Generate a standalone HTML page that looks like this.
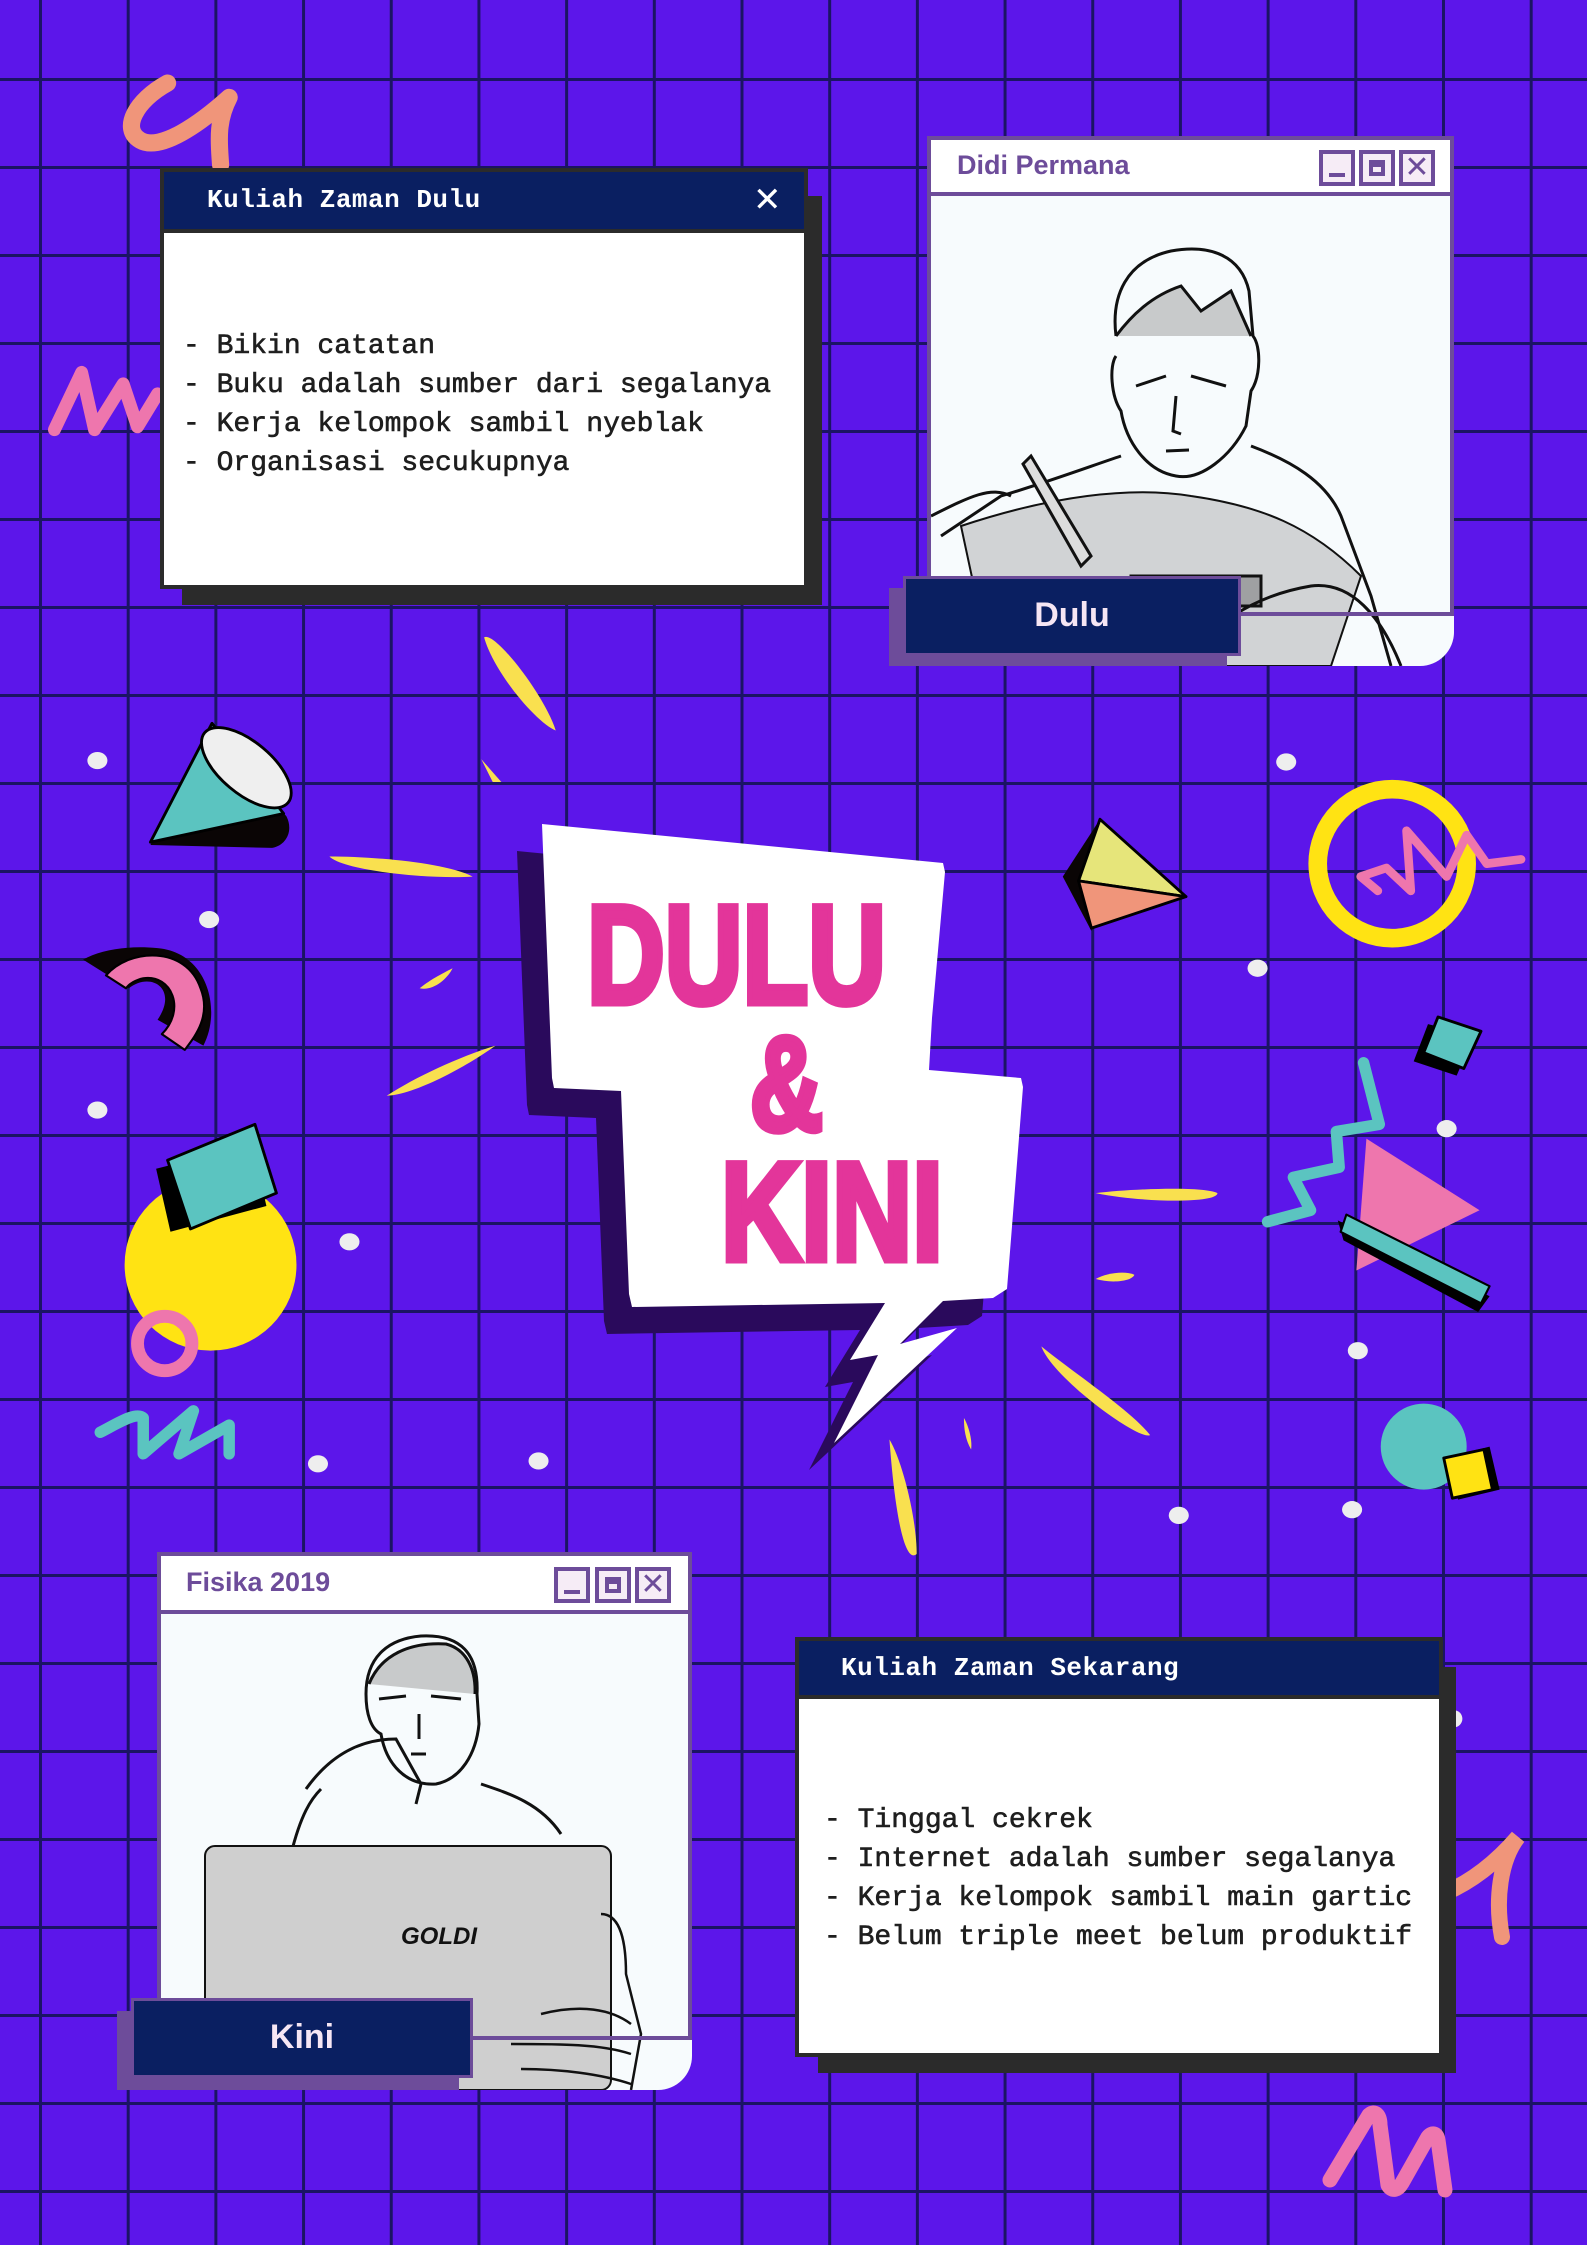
<!DOCTYPE html>
<html><head><meta charset="utf-8">
<style>
*{margin:0;padding:0;box-sizing:border-box}
html,body{width:1587px;height:2245px;overflow:hidden}
body{position:relative;background-color:#5c16ea;
background-image:linear-gradient(90deg,#1b1464 3px,transparent 3px),linear-gradient(180deg,#1b1464 3px,transparent 3px);
background-size:87.7px 88px;background-position:39px 78px;font-family:"Liberation Sans",sans-serif}
.abs{position:absolute}
.shadow{position:absolute;background:#2b2b2b}
.win{position:absolute;background:#fff;border:4px solid #2b2b2b}
.win .bar{position:absolute;left:0;top:0;right:0;background:#0a1f61;border-bottom:4px solid #2b2b2b;color:#fff;font-family:"Liberation Mono",monospace;font-weight:bold;font-size:26px;letter-spacing:0.5px}
.win .txt{position:absolute;font-family:"Liberation Mono",monospace;font-size:28px;line-height:39px;color:#1e1e1e;white-space:pre;-webkit-text-stroke:0.6px #1e1e1e}
.pwin{position:absolute;border:4px solid #6d4c9a;background:transparent}
.ptitle{position:absolute;background:#fff;color:#6d4c9a;font-weight:bold;font-size:27px}
.btn{position:absolute;width:36px;height:36px;border:4px solid #6d4c9a;background:#f6ecf6}
.lbl{position:absolute;background:#0a1f61;border:3px solid #6d4c9a;color:#f6e6f4;font-weight:bold;font-size:34px;text-align:center}
</style></head><body>

<svg class="abs" style="left:0;top:0" width="1587" height="2245" viewBox="0 0 1587 2245">
<g transform="scale(1.4323)" stroke-linecap="round" stroke-linejoin="round">
 <path d="M117,58 C95,70 84,90 98,98 C112,106 140,86 160,68 C151,85 153,100 154,115" fill="none" stroke="#f0957a" stroke-width="12"/>
 <path d="M38,300 L57,260 L66,300 L86,268 L96,298 L110,275" fill="none" stroke="#ee76ad" stroke-width="9"/>
 <path d="M70,1000 C80,995 95,985 100,990 L100,1015 L135,985 L125,1015 L160,995 L160,1015" fill="none" stroke="#5bc4c0" stroke-width="8"/>
 <path d="M885,853 L915,845 L903,822 L935,815 L933,790 L963,785 L952,742" fill="none" stroke="#5bc4c0" stroke-width="8"/>
 <circle cx="972" cy="603" r="52" fill="none" stroke="#ffe313" stroke-width="13"/>
 <path d="M962,622 L950,612 L968,606 L985,622 L982,580 L1010,612 L1024,583 L1038,603 L1062,600" fill="none" stroke="#ee76ad" stroke-width="6"/>
 <g fill="#f9e04f" stroke="none">
  <path d="M338,445 C345,440 380,485 388,510 C375,505 345,470 338,445Z"/>
  <path d="M336,530 L350,546 L344,546Z"/>
  <path d="M230,598 C260,598 310,602 330,612 C300,614 240,608 230,598Z"/>
  <path d="M293,690 C300,684 312,678 316,676 C312,684 302,692 293,690Z"/>
  <path d="M270,765 C290,752 320,738 346,730 C325,745 290,764 270,765Z"/>
  <path d="M765,833 C790,830 840,828 850,833 C850,840 800,840 765,833Z"/>
  <path d="M765,893 C772,889 785,887 792,890 C790,895 775,896 765,893Z"/>
  <path d="M727,940 C745,955 790,985 803,1002 C795,1006 735,962 727,940Z"/>
  <path d="M621,1005 C630,1020 640,1060 640,1085 C632,1092 625,1060 621,1005Z"/>
  <path d="M673,990 C676,995 679,1005 678,1012 C674,1005 673,998 673,990Z"/>
 </g>
 <g fill="#eeeeee">
  <ellipse cx="68" cy="531" rx="7" ry="6"/><ellipse cx="146" cy="642" rx="7" ry="6"/><ellipse cx="68" cy="775" rx="7" ry="6"/>
  <ellipse cx="244" cy="867" rx="7" ry="6"/><ellipse cx="222" cy="1022" rx="7" ry="6"/><ellipse cx="376" cy="1020" rx="7" ry="6"/>
  <ellipse cx="898" cy="532" rx="7" ry="6"/><ellipse cx="878" cy="676" rx="7" ry="6"/><ellipse cx="1010" cy="788" rx="7" ry="6"/>
  <ellipse cx="948" cy="943" rx="7" ry="6"/><ellipse cx="823" cy="1058" rx="7" ry="6"/><ellipse cx="944" cy="1054" rx="7" ry="6"/>
  <ellipse cx="1015" cy="1200" rx="6" ry="6"/>
 </g>
 <path d="M105,590 L190,592 C200,590 205,580 200,570 L150,510 Z" fill="#0a0505"/>
 <path d="M105,588 L148,505 L198,568 Z" fill="#5bc4c0" stroke="#000" stroke-width="2"/>
 <ellipse cx="172" cy="536" rx="38" ry="18" transform="rotate(40 172 536)" fill="#efefef" stroke="#000" stroke-width="2"/>
 <path d="M58,670 L90,690 C105,678 125,690 110,712 L142,730 C155,705 145,665 110,662 C90,660 70,663 58,670Z" fill="#0a0505"/>
 <path d="M74,681 C90,662 130,660 140,690 C148,710 135,725 129,733 L113,722 C130,705 120,680 100,683 C95,684 90,687 88,690Z" fill="#ee76ad" stroke="#000" stroke-width="1.5"/>
 <ellipse cx="147" cy="883" rx="60" ry="60" fill="#ffe313"/>
 <path d="M113,812 L180,795 L190,838 L123,856Z" fill="#000" transform="translate(-4,4)"/>
 <path d="M117,810 L178,785 L193,833 L133,858Z" fill="#5bc4c0" stroke="#000" stroke-width="2"/>
 <circle cx="115" cy="938" r="19" fill="none" stroke="#ee76ad" stroke-width="9"/>
 <path d="M742,612 L768,572 L762,650 Z" fill="#0a0505"/>
 <path d="M768,572 L828,626 L753,615Z" fill="#e6e57a" stroke="#000" stroke-width="2"/>
 <path d="M753,615 L828,626 L762,648Z" fill="#f0957a" stroke="#000" stroke-width="2"/>
 <path d="M990,738 L1000,712 L1032,720 L1020,748Z" fill="#000" transform="translate(-3,3)"/>
 <path d="M994,735 L1004,710 L1034,720 L1022,746Z" fill="#5bc4c0" stroke="#000" stroke-width="2"/>
 <path d="M954,795 L1033,845 L947,887Z" fill="#ee76ad"/>
 <path d="M934,852 L1040,905 L1032,916 L938,866Z" fill="#000"/>
 <path d="M940,848 L1040,898 L1034,910 L936,860Z" fill="#5bc4c0" stroke="#000" stroke-width="1.5"/>
 <circle cx="994" cy="1010" r="30" fill="#5bc4c0"/>
 <path d="M1012,1017 L1040,1010 L1047,1040 L1018,1047Z" fill="#000"/>
 <path d="M1008,1018 L1036,1012 L1042,1040 L1014,1046Z" fill="#ffe313" stroke="#000" stroke-width="2"/>
</g>
<path d="M1445,1893 C1475,1880 1500,1858 1518,1837 C1500,1860 1495,1900 1502,1937" fill="none" stroke="#f0957a" stroke-width="16" stroke-linecap="round"/>
<path d="M1330,2180 L1369,2115 C1375,2110 1380,2115 1380,2125 L1388,2185 C1392,2192 1398,2190 1402,2183 L1428,2137 C1432,2132 1437,2133 1438,2140 L1445,2190" fill="none" stroke="#ee76ad" stroke-width="15" stroke-linecap="round" stroke-linejoin="round"/>
<g>
 <polygon transform="translate(-25,27)" fill="#2a0a5c" points="542,824 943,863 945,872 932,1018 929,1070 1021,1078 1023,1087 1011,1239 1007,1289 993,1298 943,1301 900,1344 957,1328 834,1443 878,1355 850,1360 885,1303 632,1307 629,1294 621,1091 554,1088 552,1078"/>
 <polygon fill="#ffffff" points="542,824 943,863 945,872 932,1018 929,1070 1021,1078 1023,1087 1011,1239 1007,1289 993,1298 943,1301 900,1344 957,1328 834,1443 878,1355 850,1360 885,1303 632,1307 629,1294 621,1091 554,1088 552,1078"/>
 <g fill="#e3359a" stroke="#e3359a" stroke-width="7" stroke-linejoin="miter" font-family="Liberation Sans, sans-serif" font-weight="bold">
  <text x="587" y="1003" font-size="140" textLength="299" lengthAdjust="spacingAndGlyphs">DULU</text>
  <text x="750" y="1130" font-size="134" textLength="73" lengthAdjust="spacingAndGlyphs">&amp;</text>
  <text x="721" y="1260" font-size="140" textLength="222" lengthAdjust="spacingAndGlyphs">KINI</text>
 </g>
</g>
</svg>

<div class="shadow" style="left:182px;top:196px;width:640px;height:409px"></div>
<div class="win" style="left:160px;top:168px;width:648px;height:421px">
 <div class="bar" style="height:61px;line-height:56px;padding-left:43px">Kuliah Zaman Dulu<span style="position:absolute;right:22px;top:0;font-weight:normal;font-family:'Liberation Sans',sans-serif;font-size:34px">✕</span></div>
 <div class="txt" style="left:19px;top:155px">- Bikin catatan
- Buku adalah sumber dari segalanya
- Kerja kelompok sambil nyeblak
- Organisasi secukupnya</div>
</div>

<div class="shadow" style="left:818px;top:1667px;width:638px;height:406px"></div>
<div class="win" style="left:795px;top:1637px;width:648px;height:420px">
 <div class="bar" style="height:58px;line-height:54px;padding-left:42px">Kuliah Zaman Sekarang</div>
 <div class="txt" style="left:25px;top:160px">- Tinggal cekrek
- Internet adalah sumber segalanya
- Kerja kelompok sambil main gartic
- Belum triple meet belum produktif</div>
</div>

<div class="abs" style="left:931px;top:196px;width:523px;height:470px;background:#f7fbfd;border-bottom-right-radius:34px;overflow:hidden">
 <svg width="523" height="470" viewBox="0 0 523 470" fill="none" stroke="#111" stroke-width="3">
  <path d="M185,140 C180,100 195,65 240,55 C280,48 310,60 318,95 L322,140 C330,150 330,180 320,195 L315,230 C300,260 270,285 245,280 C215,275 195,245 190,215 C180,200 178,170 185,160"/>
  <path d="M185,140 C200,120 220,100 250,90 L270,115 L300,95 L320,140" fill="#999" fill-opacity="0.5"/>
  <path d="M205,190 L235,180 M260,180 L295,190 M245,200 L242,235 L250,238 M235,255 L258,254"/>
  <path d="M190,260 C160,270 120,285 70,300 L10,340 M320,250 C360,265 395,285 410,320 L440,400 L460,470"/>
  <path d="M30,330 C120,300 200,290 260,300 C330,310 380,330 430,380 L400,470 L60,470 Z" fill="#999" fill-opacity="0.4" stroke-width="2"/>
  <path d="M100,260 L160,360 L150,370 L92,268 Z" fill="#ddd"/>
  <path d="M200,380 L330,380 L330,410 L200,410Z" fill="#555" fill-opacity="0.4"/>
  <path d="M0,320 C40,300 60,290 80,300 M250,470 C280,430 320,400 380,390 C420,385 450,420 470,470"/>
 </svg>
</div>
<div class="pwin" style="left:927px;top:136px;width:527px;height:480px"></div>
<div class="ptitle" style="left:931px;top:140px;width:519px;height:56px;border-bottom:4px solid #6d4c9a;padding-left:26px;line-height:50px">Didi Permana</div>
<div class="btn" style="left:1319px;top:150px"><div style="position:absolute;left:6px;right:6px;bottom:5px;height:4px;background:#6d4c9a"></div></div>
<div class="btn" style="left:1359px;top:150px"><div style="position:absolute;left:6px;right:6px;top:6px;bottom:6px;border:4px solid #6d4c9a;border-top-width:7px"></div></div>
<div class="btn" style="left:1399px;top:150px;color:#6d4c9a;font-size:30px;line-height:28px;text-align:center;font-weight:normal">✕</div>
<div class="abs" style="left:889px;top:588px;width:338px;height:78px;background:#6d4c9a"></div>
<div class="lbl" style="left:903px;top:576px;width:338px;height:80px;line-height:72px">Dulu</div>

<div class="abs" style="left:161px;top:1614px;width:531px;height:476px;background:#f7fbfd;border-bottom-right-radius:34px;overflow:hidden">
 <svg width="531" height="476" viewBox="0 0 531 476" fill="none" stroke="#111" stroke-width="3">
  <path d="M205,80 C205,45 225,25 260,22 C300,20 318,40 316,80 L318,110 C315,140 300,165 275,170 C245,172 225,150 220,120 C210,115 205,100 205,80Z"/>
  <path d="M208,70 C220,40 250,28 285,30 C305,35 315,55 314,80" fill="#999" fill-opacity="0.5"/>
  <path d="M218,85 L245,82 M270,82 L300,85 M258,100 L258,125 M250,140 L265,140"/>
  <path d="M145,175 C170,140 200,125 235,125 L260,170 L255,190 M130,240 C140,200 150,185 160,175 M320,170 C350,180 380,190 400,220"/>
  <rect x="44" y="232" width="406" height="244" rx="10" fill="#cfcfcf" stroke-width="2"/>
  <text x="240" y="330" font-family="Liberation Sans, sans-serif" font-weight="bold" font-style="italic" font-size="24" fill="#111" stroke="none">GOLDI</text>
  <path d="M440,300 C460,300 465,330 465,360 L480,420 L470,476 M380,400 C420,390 450,395 470,410 M350,430 C400,430 440,430 470,440 M360,455 C400,455 440,460 470,470" stroke-width="2.5"/>
 </svg>
</div>
<div class="pwin" style="left:157px;top:1552px;width:535px;height:488px"></div>
<div class="ptitle" style="left:161px;top:1556px;width:527px;height:58px;border-bottom:4px solid #6d4c9a;padding-left:25px;line-height:52px">Fisika 2019</div>
<div class="btn" style="left:554px;top:1567px"><div style="position:absolute;left:6px;right:6px;bottom:5px;height:4px;background:#6d4c9a"></div></div>
<div class="btn" style="left:595px;top:1567px"><div style="position:absolute;left:6px;right:6px;top:6px;bottom:6px;border:4px solid #6d4c9a;border-top-width:7px"></div></div>
<div class="btn" style="left:635px;top:1567px;color:#6d4c9a;font-size:30px;line-height:28px;text-align:center">✕</div>
<div class="abs" style="left:117px;top:2011px;width:342px;height:79px;background:#6d4c9a"></div>
<div class="lbl" style="left:131px;top:1998px;width:342px;height:80px;line-height:72px">Kini</div>

</body></html>
